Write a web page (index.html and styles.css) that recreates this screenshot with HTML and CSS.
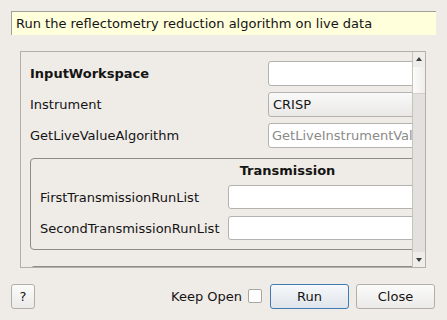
FILE: index.html
```html
<!DOCTYPE html>
<html lang="en">
<head>
  <meta charset="UTF-8">
  <title>ReflectometryReductionOneLiveData</title>
  <link rel="stylesheet" href="styles.css">
</head>
<body>
  <div class="dialog">
    <div class="description">Run the reflectometry reduction algorithm on live data</div>

    <div class="scroll-area">
      <div class="viewport">
        <div class="form">
          <div class="form-row">
            <label class="bold">InputWorkspace</label>
            <input type="text" class="field">
          </div>
          <div class="form-row">
            <label>Instrument</label>
            <div class="combo">CRISP</div>
          </div>
          <div class="form-row">
            <label>GetLiveValueAlgorithm</label>
            <input type="text" class="field" placeholder="GetLiveInstrumentValue">
          </div>

          <fieldset class="group">
            <div class="group-title">Transmission</div>
            <div class="group-grid">
              <label>FirstTransmissionRunList</label>
              <input type="text" class="field">
              <label>SecondTransmissionRunList</label>
              <input type="text" class="field">
            </div>
          </fieldset>

          <fieldset class="group"></fieldset>
        </div>
      </div>
      <div class="scrollbar">
        <div class="arrow up"></div>
        <div class="track"><div class="handle"></div></div>
        <div class="arrow down"></div>
      </div>
    </div>

    <div class="buttons">
      <button class="btn help">?</button>
      <span class="spacer"></span>
      <label class="keep-open">Keep Open <span class="check"></span></label>
      <button class="btn run">Run</button>
      <button class="btn">Close</button>
    </div>
  </div>
</body>
</html>
```

FILE: styles.css
```css
* {
  margin: 0;
  padding: 0;
  box-sizing: border-box;
}

body {
  font-family: 'DejaVu Sans', sans-serif;
  font-size: 13px;
  color: #141414;
  background: #efebe7;
  width: 447px;
  height: 320px;
  overflow: hidden;
}

.dialog {
  display: flex;
  flex-direction: column;
  height: 320px;
}

.description {
  margin: 11px 11px 0 11px;
  height: 24px;
  line-height: 23px;
  padding-left: 4px;
  background: #ffffdc;
  border-top: 1px solid #a09f9c;
  border-left: 1px solid #a09f9c;
}

.scroll-area {
  display: flex;
  margin: 16px 21px 0 20px;
  height: 217px;
  border: 1px solid #b3b0ac;
}

.viewport {
  flex: 1;
  overflow: hidden;
}

.form {
  width: 525px;
  padding: 9px 0 0 9px;
  display: flex;
  flex-direction: column;
  gap: 6px;
}

.form-row {
  display: grid;
  grid-template-columns: 238px 1fr;
  align-items: center;
  height: 25px;
}

.bold {
  font-weight: bold;
}

.field {
  height: 25px;
  border: 1px solid #b4b2ae;
  border-radius: 3px;
  background: #fff;
  font-family: 'DejaVu Sans', sans-serif;
  font-size: 13px;
  padding: 0 3px;
  outline: none;
}

.field::placeholder {
  color: #8a8a8a;
}

.combo {
  height: 25px;
  line-height: 23px;
  border: 1px solid #b4b2ae;
  border-radius: 3px;
  padding-left: 4px;
  background: linear-gradient(#fafafa, #e9e8e6);
}

.group {
  border: 1px solid #8e8c89;
  border-radius: 4px;
  margin-top: 4px;
  height: 92px;
  padding: 2px 10px 0 9px;
}

.group + .group {
  margin-top: 10px;
}

.group-title {
  font-weight: bold;
  text-align: center;
  height: 24px;
  line-height: 20px;
}

.group-grid {
  display: grid;
  grid-template-columns: 188px 1fr;
  row-gap: 7px;
  align-items: center;
}

.group-grid .field {
  height: 24px;
}

.scrollbar {
  width: 13px;
  display: flex;
  flex-direction: column;
  border-left: 1px solid #c6c3bf;
  background: #e3e1de;
}

.arrow {
  height: 15px;
  background: #efedea;
  position: relative;
}

.arrow::after {
  content: '';
  position: absolute;
  left: 3px;
  border-left: 3px solid transparent;
  border-right: 3px solid transparent;
}

.arrow.up::after {
  top: 5px;
  border-bottom: 4px solid #3c3c3c;
}

.arrow.down::after {
  top: 6px;
  border-top: 4px solid #3c3c3c;
}

.track {
  flex: 1;
}

.handle {
  height: 27px;
  background: linear-gradient(90deg, #fbfbfa, #f0eeec);
  border-bottom: 1px solid #d2cfcb;
}

.buttons {
  display: flex;
  align-items: center;
  padding: 16px 12px 0 11px;
  height: 40px;
}

.spacer {
  flex: 1;
}

.btn {
  height: 25px;
  width: 79px;
  border: 1px solid #b2afab;
  border-radius: 3px;
  background: linear-gradient(#fbfbfb, #ebeae8);
  font-family: 'DejaVu Sans', sans-serif;
  font-size: 13px;
  color: #141414;
  margin-left: 7px;
}

.btn.help {
  width: 24px;
  margin-left: 0;
}

.btn.run {
  border-color: #3f7cb3;
  background: linear-gradient(#f6f8fa, #dfe5eb);
}

.keep-open {
  display: flex;
  align-items: center;
  gap: 6px;
  margin-right: 1px;
}

.check {
  width: 14px;
  height: 14px;
  border: 1px solid #a9a6a2;
  background: #fff;
  border-radius: 2px;
}
```
